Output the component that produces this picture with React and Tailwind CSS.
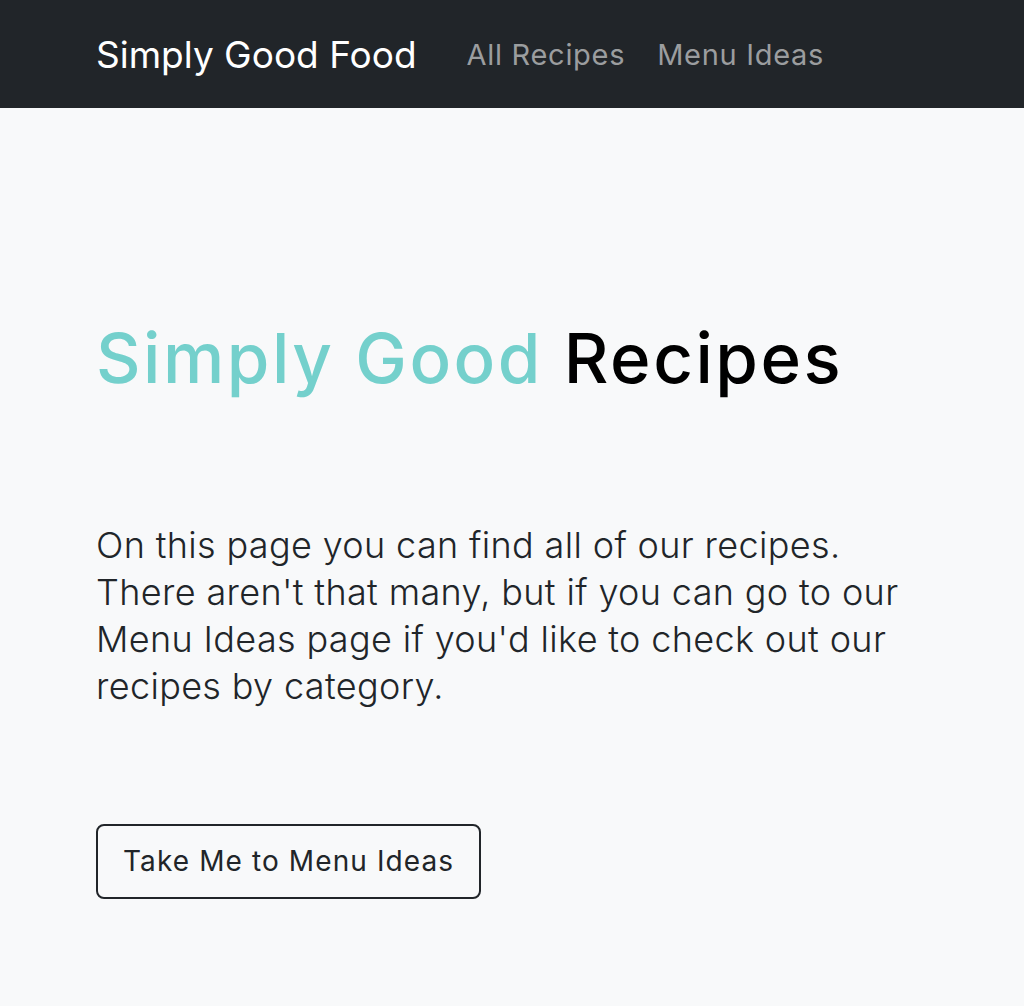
import React from "react";

export default function App() {
  return (
    <div
      className="min-h-[1006px] bg-[#f8f9fa] text-[#212529]"
      style={{ fontFamily: "Inter, 'Noto Sans', sans-serif" }}
    >
      <nav className="h-[108px] bg-[#212529] flex items-center px-[96px]">
        <a className="text-white text-[37px] leading-none mr-[50px] tracking-[0px]">Simply Good Food</a>
        <div className="flex items-center gap-[32px]">
          <a className="text-[#9b9d9f] text-[29px] leading-none tracking-[0.7px]">All Recipes</a>
          <a className="text-[#9b9d9f] text-[29px] leading-none tracking-[0.7px]">Menu Ideas</a>
        </div>
      </nav>
      <main className="px-[96px] pt-[209px]">
        <h1 className="text-[69px] leading-[1.2] font-medium tracking-[2.5px]">
          <span className="text-[#74d0cc]">Simply Good</span>{" "}
          <span className="text-black">Recipes</span>
        </h1>
        <p className="mt-[122px] text-[36px] leading-[47px] font-light tracking-[0.35px] max-w-[820px]">
          On this page you can find all of our recipes. There aren't that many, but if you can go to our Menu Ideas page if you'd like to check out our recipes by category.
        </p>
        <button className="mt-[114px] h-[75px] px-[25px] border-2 border-[#212529] rounded-[8px] text-[28px] text-[#212529] leading-none tracking-[1.1px]">
          Take Me to Menu Ideas
        </button>
      </main>
    </div>
  );
}
